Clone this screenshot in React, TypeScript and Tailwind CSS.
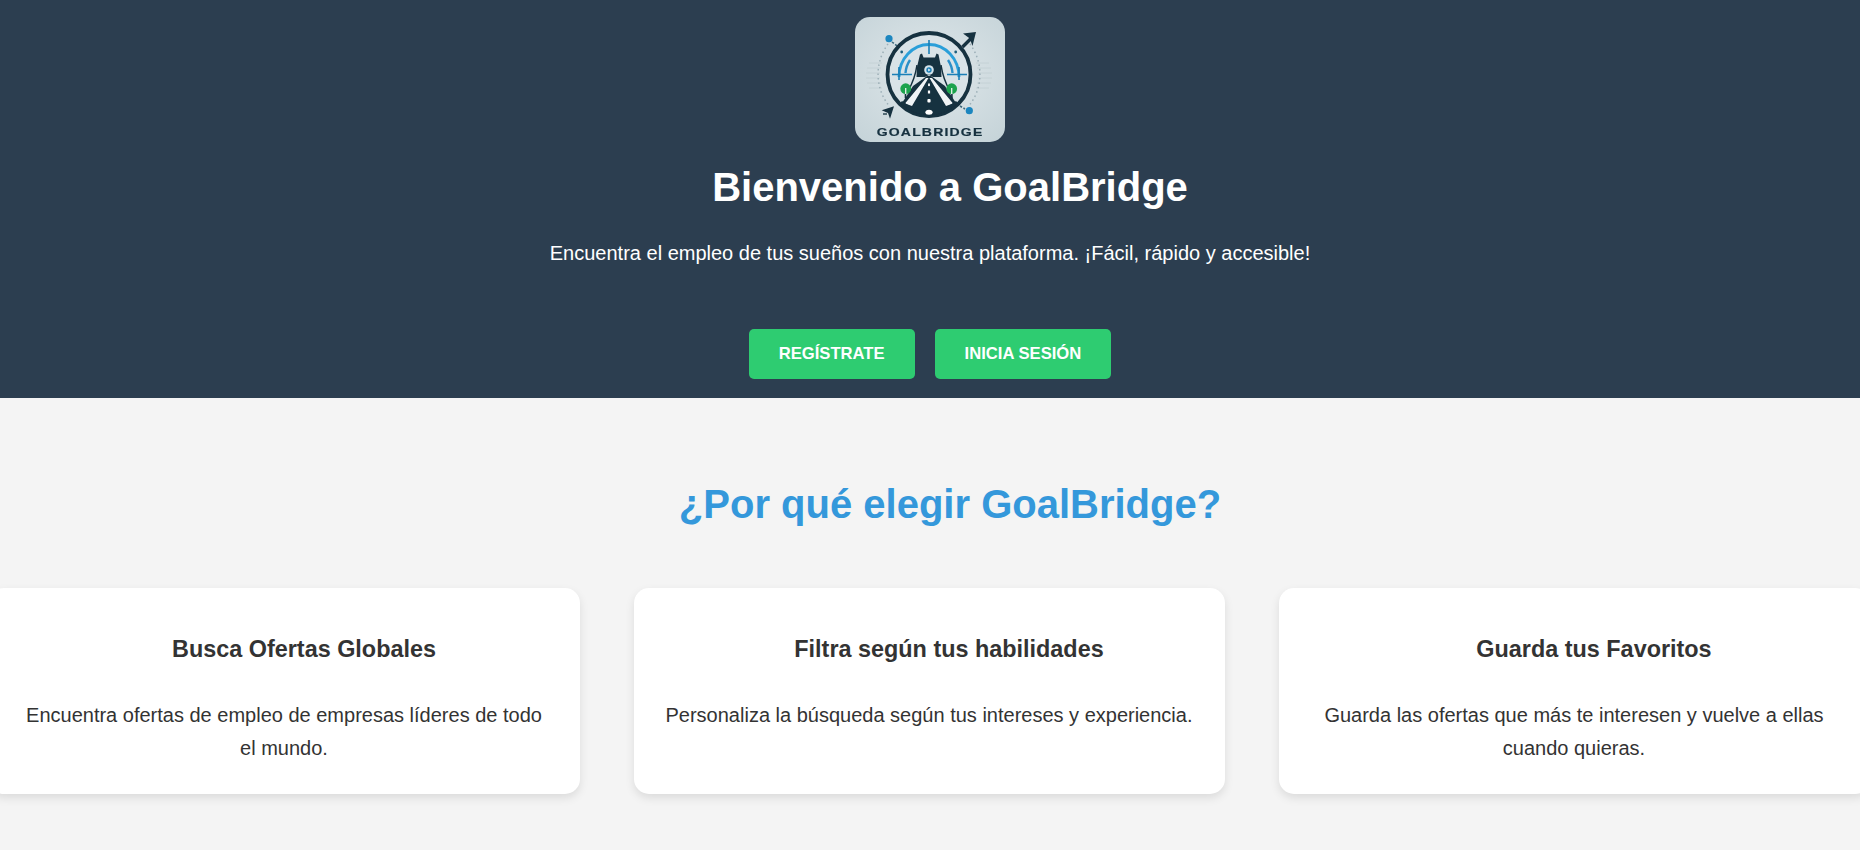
const cards = [
  { title: "Busca Ofertas Globales", body: "Encuentra ofertas de empleo de empresas líderes de todo el mundo." },
  { title: "Filtra según tus habilidades", body: "Personaliza la búsqueda según tus intereses y experiencia." },
  { title: "Guarda tus Favoritos", body: "Guarda las ofertas que más te interesen y vuelve a ellas cuando quieras." },
];

function Logo() {
  const dark = "#16303f";
  return (
    <svg width="150" height="125" viewBox="0 0 150 125" className="block rounded-[15px]">
      <defs>
        <radialGradient id="lg" cx="50%" cy="45%" r="70%">
          <stop offset="0%" stopColor="#dfe7ea" />
          <stop offset="100%" stopColor="#c6d4d9" />
        </radialGradient>
        <filter id="sb" x="-5%" y="-5%" width="110%" height="110%">
          <feGaussianBlur stdDeviation="0.4" />
        </filter>
        <clipPath id="ring">
          <circle cx="74" cy="57.5" r="40.5" />
        </clipPath>
      </defs>
      <rect width="150" height="125" fill="url(#lg)" />
      <g filter="url(#sb)">
        <path d="M14 46H27M12 51H26M11 56H25M11 61H25M12 66H26M14 71H27M121 46H134M122 51H136M123 56H137M123 61H137M122 66H136M121 71H134" stroke="#c4d1d6" strokeWidth="1" />
        <path d="M33 27 A51 51 0 0 0 33 87.5" fill="none" stroke="#9cafb7" strokeWidth="1.5" strokeDasharray="1.5 3" />
        <path d="M115 27 A51 51 0 0 1 115 87.5" fill="none" stroke="#9cafb7" strokeWidth="1.5" strokeDasharray="1.5 3" />
        <path d="M37 25 L42 29 M105 89 L110 92" stroke="#3f6a7c" strokeWidth="1.6" strokeDasharray="2.4 1.6" />

        <circle cx="74" cy="57.5" r="41.5" fill="#d9e3e7" stroke={dark} strokeWidth="3.8" />

        <path d="M44 60 A30 32.5 0 0 1 104 60" fill="none" stroke="#2a9fd9" strokeWidth="2.8" />
        <path d="M74 23V37M37 57.5H57M92 57.5H112M44 50V63M104 50V63" stroke="#1b7fb6" strokeWidth="1.6" />
        <path d="M55 43 Q51 49 50.5 56 M93 43 Q97 49 97.5 56" fill="none" stroke="#2b8fc8" strokeWidth="2.4" />
        <circle cx="46.7" cy="35" r="1.4" fill="#1f5f7e" />
        <circle cx="100.7" cy="35" r="1.4" fill="#1f5f7e" />

        <path d="M62 48 Q60 62 53 74 M86 48 Q88 62 95 74" fill="none" stroke={dark} strokeWidth="1.5" />
        <path d="M65 37.5 L67 36.5 L68.5 40.5 L80 40.5 L81.5 36.5 L83.5 37.5 L86 50 L86.5 60 L78 60 L74 58 L70 60 L61.5 60 L62 50Z" fill={dark} />
        <circle cx="74" cy="53" r="4.8" fill="#d3e3ea" />
        <circle cx="74" cy="53" r="2.7" fill="#1b7fb6" />
        <path d="M73.2 51.4 L75.6 53 L73.2 54.6Z" fill="#eaf2f5" />

        <g clipPath="url(#ring)">
          <path d="M72 59 L76 59 L90 69 L110 100 L38 100 L58 69 Z" fill={dark} />
          <path d="M71 61 L73.5 61 L57 89 L50 86.5Z M77 61 L74.5 61 L91 89 L98 86.5Z" fill="#f0f4f6" />
          <path d="M47 84 L56 90 L92 90 L101 84 L116 100 L32 100Z" fill={dark} />
        </g>

        <rect x="73.1" y="66.5" width="1.8" height="2.6" fill="#fff" />
        <rect x="72.9" y="73.5" width="2.2" height="3" fill="#fff" />
        <rect x="72.4" y="82" width="3.2" height="3.6" rx="1" fill="#fff" />
        <ellipse cx="74" cy="95.3" rx="3.6" ry="2.5" fill="#fff" />

        <circle cx="50.7" cy="71.7" r="5.4" fill="#1fa34e" />
        <circle cx="96.7" cy="71.7" r="5.4" fill="#1fa34e" />
        <path d="M50.7 71V78M96.7 71V78" stroke="#e6f2ea" strokeWidth="1.3" />
        <path d="M50.5 77V81M96.9 77V81" stroke={dark} strokeWidth="1.6" />

        <path d="M107.5 30 L117 20.5" stroke={dark} strokeWidth="3.4" />
        <path d="M108 16.5 L121 15 L117.5 29 L114.8 21.5 Z" fill={dark} />
        <path d="M26.7 93.3 L39 89.3 L35 101.7 L33 96 Z" fill={dark} />
        <path d="M28 97 L32 97" stroke={dark} strokeWidth="1.3" />

        <circle cx="34" cy="21.7" r="3.6" fill="#1b86bf" />
        <circle cx="114.3" cy="93.7" r="3.6" fill="#1b86bf" />

        <text transform="translate(21.7 119.3) scale(1.22 1)" textLength="86.5" lengthAdjust="spacing" fill={dark} stroke={dark} strokeWidth="0.2" fontSize="11.5" fontWeight="700" fontFamily="'Liberation Sans', sans-serif">GOALBRIDGE</text>
      </g>
    </svg>
  );
}

export default function App() {
  return (
    <div className="min-h-[850px] overflow-hidden bg-[#f4f4f4] font-['Liberation_Sans',Arial,sans-serif] text-[#333]">
      <header className="flex h-[398px] flex-col items-center bg-[#2c3e50] pt-[17px] text-white">
        <Logo />
        <h1 className="mt-[22px] ml-[40px] text-[40px] font-bold leading-[46px]">Bienvenido a GoalBridge</h1>
        <p className="mt-[27px] text-[20px] leading-[32px]">Encuentra el empleo de tus sueños con nuestra plataforma. ¡Fácil, rápido y accesible!</p>
        <div className="mt-[60px] flex gap-5">
          <button className="h-[50px] rounded-[5px] bg-[#2ecc71] px-[30px] text-[16.64px] font-bold text-white">REGÍSTRATE</button>
          <button className="h-[50px] rounded-[5px] bg-[#2ecc71] px-[30px] text-[16.64px] font-bold text-white">INICIA SESIÓN</button>
        </div>
      </header>
      <section className="pt-[83px]">
        <h2 className="ml-[40px] text-center text-[40px] font-bold leading-[46px] text-[#3498db]">¿Por qué elegir GoalBridge?</h2>
        <div className="mt-[61px] flex justify-center gap-[54px] pr-[2px]">
          {cards.map((c) => (
            <div key={c.title} className="h-[206px] w-[591px] shrink-0 rounded-[15px] bg-white px-[30px] pt-[48px] text-center shadow-[0_4px_10px_rgba(0,0,0,0.1)]">
              <h3 className="ml-[40px] text-[23.4px] font-bold leading-[26px]">{c.title}</h3>
              <p className="mt-[37px] text-[20px] leading-[33px]">{c.body}</p>
            </div>
          ))}
        </div>
      </section>
    </div>
  );
}
